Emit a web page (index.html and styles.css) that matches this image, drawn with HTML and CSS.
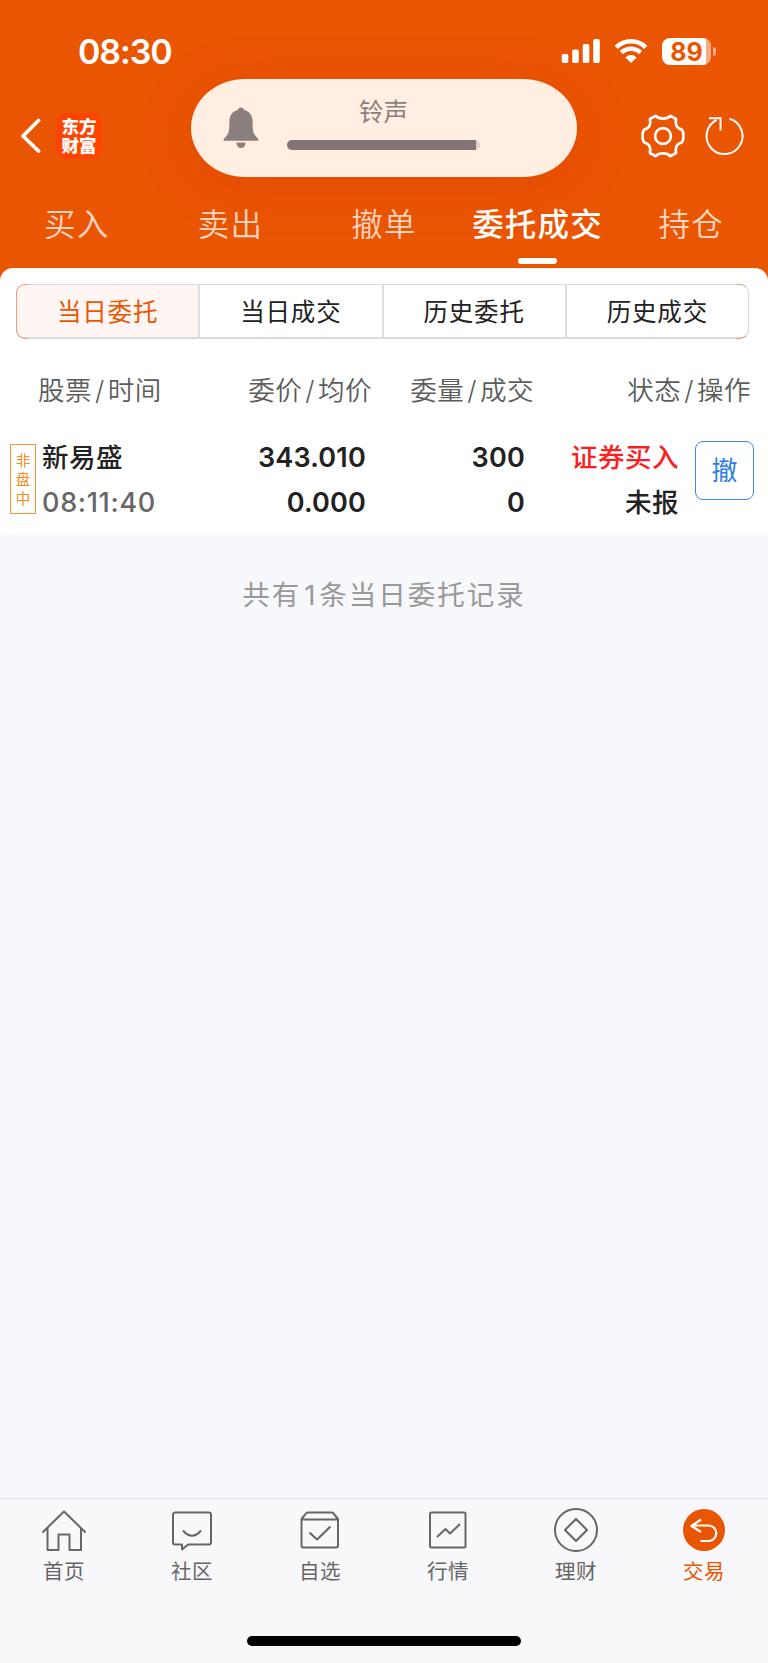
FILE: index.html
```html
<!DOCTYPE html>
<html lang="zh-CN">
<head>
  <meta charset="UTF-8">
  <meta name="viewport" content="width=device-width, initial-scale=1.0">
  <title>委托成交</title>
  <link rel="stylesheet" href="styles.css">
</head>
<body>
  <header class="header">
    <!-- Status bar -->
    <div class="status-bar">
      <span class="clock">08:30</span>
      <div class="status-icons">
        <svg class="signal" width="40" height="26" viewBox="0 0 40 26" fill="#fff">
          <rect x="0.7" y="16" width="6.6" height="9" rx="1.8"/>
          <rect x="11.2" y="11.5" width="6.6" height="13.5" rx="1.8"/>
          <rect x="21.7" y="6" width="6.6" height="19" rx="1.8"/>
          <rect x="32.2" y="1" width="6.6" height="24" rx="1.8"/>
        </svg>
        <svg class="wifi" width="34" height="26" viewBox="0 0 34 26" fill="none" stroke="#fff" stroke-width="4.6">
          <path d="M2.3 9.3a21 21 0 0 1 29.4 0"/>
          <path d="M7.4 14.7a13.6 13.6 0 0 1 19.2 0"/>
          <path d="M17 25L11.4 19.4a8 8 0 0 1 11.2 0z" fill="#fff" stroke="none"/>
        </svg>
        <div class="battery"><span class="battery-body">89</span><span class="battery-tip"></span></div>
      </div>
    </div>

    <!-- Navigation -->
    <div class="nav-bar">
      <svg class="back" width="22" height="36" viewBox="0 0 22 36" fill="none" stroke="#fff" stroke-width="3.8" stroke-linecap="round" stroke-linejoin="round">
        <path d="M18.500 2.500L3 18l15.500 15"/>
      </svg>
      <div class="logo">东方<br>财富</div>
      <div class="nav-actions">
        <svg width="46" height="46" viewBox="-23 -23 46 46" fill="none" stroke="#fff" stroke-width="2.700" stroke-linejoin="round">
          <path d="M-7.500 -20.200C-4 -16.500 4 -16.500 7.500 -20.200L13 -17C12.200 -11 13 -8.500 19 -6.200L20.300 -3V3L19 6.200C13 8.500 12.200 11 13 17L7.500 20.200C4 16.500 -4 16.500 -7.500 20.200L-13 17C-12.200 11 -13 8.500 -19 6.200L-20.300 3V-3L-19 -6.200C-13 -8.500 -12.200 -11 -13 -17Z"/>
          <circle r="7.900"/>
        </svg>
        <svg width="42" height="42" viewBox="0 0 42 42" fill="none" stroke="#fff" stroke-width="2">
          <path d="M25.500 3.800A18 18 0 1 1 12.500 5"/>
          <path d="M5 3.300H16.500V15.500"/>
        </svg>
      </div>
    </div>

    <nav class="tabs">
      <a class="tab">买入</a>
      <a class="tab">卖出</a>
      <a class="tab">撤单</a>
      <a class="tab active">委托成交</a>
      <a class="tab">持仓</a>
    </nav>
  </header>

  <!-- Ringer volume overlay -->
  <div class="volume">
    <svg class="bell" width="36" height="42" viewBox="0 0 36 42" fill="#8b7f7e">
      <path d="M18 0.500c1.800 0 2.800 1 3 2.500C26.500 4.200 29.600 8.500 29.600 14.500c0 9 .4 12.500 4.400 16 1 1 1.500 1.600 1.500 3.300H.5c0-1.700.5-2.300 1.500-3.300 4-3.500 4.400-7 4.400-16C6.400 8.500 9.500 4.200 15 3c.2-1.500 1.200-2.500 3-2.500z"/>
      <path d="M13.500 35.500h9c0 3.500-1.800 5.500-4.500 5.500s-4.500-2-4.500-5.500z"/>
    </svg>
    <div class="volume-main">
      <span class="volume-title">铃声</span>
      <div class="volume-track"><div class="volume-level"></div></div>
    </div>
  </div>

  <main class="panel">
    <div class="segments">
      <div class="segment active">当日委托</div>
      <div class="segment">当日成交</div>
      <div class="segment">历史委托</div>
      <div class="segment">历史成交</div>
    </div>

    <div class="table-head">
      <span>股票<i>/</i>时间</span>
      <span>委价<i>/</i>均价</span>
      <span>委量<i>/</i>成交</span>
      <span>状态<i>/</i>操作</span>
    </div>

    <div class="order">
      <div class="tag">非<br>盘<br>中</div>
      <div class="cell stock"><span>新易盛</span><span class="time">08:11:40</span></div>
      <div class="cell"><span>343.010</span><span>0.000</span></div>
      <div class="cell"><span>300</span><span>0</span></div>
      <div class="cell state"><span class="buy">证券买入</span><span>未报</span></div>
      <button class="cancel">撤</button>
    </div>
  </main>

  <p class="summary">共有<i>1</i>条当日委托记录</p>

  <!-- Bottom bar -->
  <footer class="tabbar">
    <div class="tabbar-items">
      <a class="item">
        <svg width="46" height="46" viewBox="0 0 46 46">
          <path d="M1.500 24.500L23 3.500l21.500 21M6.500 20v22H17.500V26.500H28.500V42H40V20"/>
        </svg>
        <span>首页</span>
      </a>
      <a class="item">
        <svg width="46" height="46" viewBox="0 0 46 46">
          <path d="M6 4.500H40a2 2 0 0 1 2 2V34.500a2 2 0 0 1-2 2H19L13 41.500V36.500H6a2 2 0 0 1-2-2V6.500a2 2 0 0 1 2-2zM14 22.500Q23 33 32 22.500"/>
        </svg>
        <span>社区</span>
      </a>
      <a class="item">
        <svg width="46" height="46" viewBox="0 0 46 46">
          <path d="M4.500 11V37.500a2 2 0 0 0 2 2h32.500a2 2 0 0 0 2-2V11L36.500 5.500Q35.700 4.500 34.500 4.500H11Q9.800 4.500 9 5.500zM4.500 11.500H41M12.500 24.500l7.500 7L33.500 18.500"/>
        </svg>
        <span>自选</span>
      </a>
      <a class="item">
        <svg width="46" height="46" viewBox="0 0 46 46">
          <rect x="5" y="4.500" width="35.500" height="35" rx="1.500"/>
          <path d="M12 29l8.500-8 4.500 4.500 10-9.500"/>
        </svg>
        <span>行情</span>
      </a>
      <a class="item">
        <svg width="46" height="46" viewBox="0 0 46 46">
          <circle cx="23" cy="22" r="21"/>
          <path d="M23 11l11 11-11 11-11-11z"/>
        </svg>
        <span>理财</span>
      </a>
      <a class="item active">
        <svg width="46" height="46" viewBox="0 0 46 46">
          <circle class="disc" cx="23" cy="22" r="21"/>
          <path class="arrow" d="M20 11.500L10.500 18 20 24M11 17.500H27.500a7.500 7.500 0 0 1 0 15.500H19.500"/>
        </svg>
        <span>交易</span>
      </a>
    </div>
    <div class="home-indicator"></div>
  </footer>
</body>
</html>
```
FILE: styles.css
```css
/* General Styles */
* {
  box-sizing: border-box;
}

body {
  font-family: Inter, "Noto Sans CJK SC", sans-serif;
  background-color: #f7f8fb;
  color: #222;
  margin: 0;
  height: 1663px;
  display: flex;
  flex-direction: column;
  position: relative;
  overflow: hidden;
}

/* Header */
.header {
  background-color: #ea5502;
  height: 284px;
  padding-top: 32px;
  flex: none;
  color: #fff;
}

.status-bar {
  display: flex;
  justify-content: space-between;
  align-items: center;
  height: 38px;
  padding: 0 52px 0 78px;
}

.clock {
  font-size: 34px;
  font-weight: 600;
  letter-spacing: -1.100px;
}

.status-icons {
  display: flex;
  align-items: center;
}

.wifi {
  margin-left: 13px;
}

.battery {
  display: flex;
  align-items: center;
  gap: 2px;
  margin-left: 14px;
}

.battery-body {
  width: 49px;
  height: 27px;
  border-radius: 8px;
  background: linear-gradient(90deg, #fff 44px, #f5ab83 44px);
  color: #ea5502;
  font-size: 25px;
  font-weight: 700;
  line-height: 28px;
  text-align: center;
}

.battery-tip {
  width: 3px;
  height: 9px;
  border-radius: 0 4px 4px 0;
  background-color: #f5ab83;
}

.nav-bar {
  display: flex;
  align-items: center;
  height: 50px;
  margin-top: 41px;
  padding: 0 22px 0 20px;
}

.logo {
  width: 46px;
  height: 46px;
  margin-left: 14px;
  padding-top: 4px;
  border-radius: 10px;
  background-color: #ff4400;
  font-size: 17.500px;
  font-weight: 900;
  line-height: 19px;
  text-align: center;
}

.nav-actions {
  display: flex;
  align-items: center;
  gap: 18px;
  margin-left: auto;
}

.tabs {
  display: flex;
  height: 80px;
  margin-top: 26px;
}

.tab {
  flex: 1;
  display: flex;
  flex-direction: column;
  align-items: center;
  font-size: 31.500px;
  font-weight: 350;
  line-height: 75px;
  letter-spacing: 1.200px;
  white-space: nowrap;
  color: #fcd6c1;
}

.tab.active {
  font-weight: 500;
  color: #fff;
}

.tab.active::after {
  content: "";
  width: 39px;
  height: 6px;
  margin-top: -4px;
  border-radius: 3px;
  background-color: #fff;
}

/* Volume overlay */
.volume {
  position: absolute;
  top: 79px;
  left: 191px;
  width: 386px;
  height: 98px;
  padding: 0 97px 0 32px;
  display: flex;
  align-items: center;
  border-radius: 54px / 49px;
  background-color: #ffeee1;
  box-shadow: 0 8px 50px rgba(215, 45, 0, 0.28);
}

.volume-main {
  flex: 1;
  margin: 0 0 11px 28px;
  display: flex;
  flex-direction: column;
  align-items: center;
}

.volume-title {
  font-size: 24.500px;
  line-height: 32px;
  color: #8b7f7e;
}

.volume-track {
  width: 193px;
  height: 10px;
  margin-top: 12px;
  border-radius: 5px;
  background-color: #e5cfc5;
  overflow: hidden;
}

.volume-level {
  width: 188.500px;
  height: 10px;
  background-color: #807574;
}

/* Orders panel */
.panel {
  position: relative;
  flex: none;
  height: 267px;
  margin-top: -16px;
  padding-top: 16px;
  border-radius: 13px 13px 0 0;
  background-color: #fff;
}

.segments {
  position: relative;
  display: flex;
  height: 55px;
  margin: 0 19px 0 16px;
  border: 1px solid #d9dbe1;
  border-bottom-width: 2px;
  border-radius: 9px;
}

/* Tinted rounded ends of the segmented control */
.segments::before,
.segments::after {
  content: "";
  position: absolute;
  top: -1px;
  bottom: -2px;
  width: 12px;
  border: 1px solid #eba07c;
}

.segments::before {
  left: -1px;
  border-right: 0;
  border-radius: 9px 0 0 9px;
}

.segments::after {
  right: -1px;
  border-left: 0;
  border-right-color: #d9dbe1;
  border-radius: 0 9px 9px 0;
}

.segment {
  flex: 1;
  font-size: 24.500px;
  line-height: 55px;
  height: 52px;
  letter-spacing: 0.800px;
  text-align: center;
}

.segment + .segment {
  border-left: 2px solid #dcdee3;
}

.segment.active {
  border-radius: 8px 0 0 8px;
  background-color: #fff5f2;
  color: #ea5502;
}

.table-head {
  display: grid;
  grid-template-columns: 200px 134px 162px 217px;
  height: 40px;
  margin: 32px 0 0 38px;
  font-size: 26.500px;
  font-weight: 350;
  line-height: 39px;
  letter-spacing: 0.500px;
  text-align: right;
  color: #5c5c5c;
}

.table-head span:first-child {
  text-align: left;
}

.table-head i {
  font-style: normal;
  margin: 0 3px;
}

.order {
  display: flex;
  margin-top: 25px;
  padding-left: 10px;
}

.tag {
  width: 26px;
  height: 70px;
  margin-top: 8px;
  padding-top: 6px;
  border: 1px solid #f5943d;
  font-size: 14.500px;
  line-height: 19px;
  text-align: center;
  color: #f58a20;
}

.cell {
  display: flex;
  flex-direction: column;
  width: 159px;
  margin-top: -1px;
  font-size: 27px;
  font-weight: 600;
  line-height: 45px;
  letter-spacing: 0.200px;
  text-align: right;
  white-space: nowrap;
}

.cell.stock {
  width: 165px;
  margin-left: 6px;
  font-weight: 500;
  font-size: 26.500px;
  letter-spacing: 0.500px;
  text-align: left;
}

.cell .time {
  font-size: 27px;
  font-weight: 550;
  letter-spacing: 0.700px;
  color: #666;
}

.cell.state {
  width: 154px;
  font-size: 26.500px;
  font-weight: 500;
  letter-spacing: 0.500px;
}

.buy {
  color: #fb2020;
}

.cancel {
  width: 59px;
  height: 59px;
  margin: 5px 0 0 16px;
  padding: 0;
  border: 1px solid #4288e8;
  border-radius: 8px;
  background-color: #fff;
  color: #2f7ce4;
  font-family: inherit;
  font-size: 26px;
  line-height: 55px;
}

.summary {
  margin: 40px 0 0;
  font-size: 27.500px;
  line-height: 40px;
  letter-spacing: 2px;
  text-align: center;
  color: #999;
}

.summary i {
  font-style: normal;
  margin: 0 2px 0 3px;
}

/* Bottom bar */
.tabbar {
  height: 165px;
  margin-top: auto;
  padding-top: 9px;
  border-top: 1px solid #dedfe2;
  background-color: #f8f8fb;
}

.tabbar-items {
  display: flex;
}

.item {
  flex: 1;
  display: flex;
  flex-direction: column;
  align-items: center;
  font-size: 20.500px;
  font-weight: 400;
  line-height: 30px;
  letter-spacing: 0.600px;
  color: #666;
}

.item svg {
  fill: none;
  stroke: #666;
  stroke-width: 2;
  stroke-linejoin: round;
}

.item span {
  margin-top: 3px;
}

.item.active {
  color: #ea5502;
}

.item .disc {
  fill: #ea5502;
  stroke: none;
}

.item .arrow {
  stroke: #fff;
  stroke-width: 2.200;
}

.home-indicator {
  width: 274px;
  height: 10px;
  margin: 49px auto 0;
  border-radius: 5px;
  background-color: #000;
}
```
